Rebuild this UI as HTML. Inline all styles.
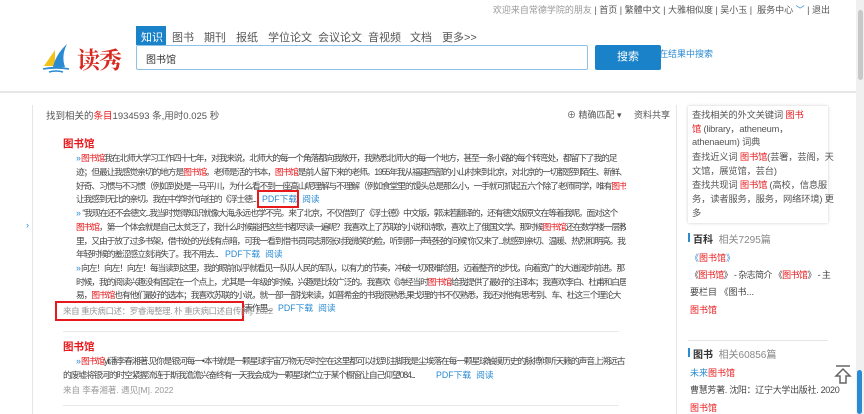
<!DOCTYPE html>
<html><head><meta charset="utf-8"><style>
*{margin:0;padding:0;box-sizing:border-box}
body{width:864px;height:414px;overflow:hidden;background:#fff;font-family:"Liberation Sans","Noto Sans CJK SC",sans-serif;color:#333;position:relative}
.a{position:absolute;white-space:nowrap}
.r{color:#e8191c}
.b{color:#2a8ad2}
.t{font-size:8.8px;color:#444;line-height:13px;overflow:hidden;letter-spacing:-1.15px}
.g{color:#888}
.p{position:absolute;font-size:8.8px;color:#2a8ad2;white-space:nowrap;line-height:13px}
.rp div{height:13.7px}
</style></head><body>
<div class="a" style="right:34px;top:3px;font-size:9px;color:#555"><span style="color:#999">欢迎来自常德学院的朋友</span> | 首页 | 繁體中文 | 大雅相似度 | 吴小玉 | &nbsp;服务中心 <span class="b">﹀</span> | 退出</div>
<div style="position:absolute;right:0;top:0;width:8px;height:414px;background:#f0f0f0"></div>
<div style="position:absolute;right:1px;top:10px;width:5px;height:70px;background:#c8c8c8;border-radius:3px"></div>
<svg class="a" style="left:41px;top:40px" width="30" height="34" viewBox="0 0 30 34">
<path d="M3 26 L14 10 L14 26 Z" fill="#f2c21b"/>
<path d="M12 27 Q15 14 26 4 Q20 16 24 27 Z" fill="#2a8ad2"/>
<path d="M2 29 Q15 26 28 29 Q15 27 2 29Z" fill="#2a8ad2" stroke="#2a8ad2" stroke-width="1.5"/>
<path d="M8 32 Q15 30 22 32" stroke="#2a8ad2" stroke-width="1.5" fill="none"/>
</svg>
<div class="a" style="left:77px;top:42px;font-size:23px;color:#d8281f;font-family:'Noto Serif CJK SC',serif;font-weight:bold;letter-spacing:-1px">读秀</div>
<div class="a" style="left:136px;top:26px;width:30px;height:19px;background:#1a82c8"></div>
<div class="a" style="top:29px;font-size:11px;color:#555;left:141px"><span style="color:#fff">知识</span></div>
<div class="a" style="top:29px;font-size:11px;color:#555;left:172px">图书</div>
<div class="a" style="top:29px;font-size:11px;color:#555;left:204px">期刊</div>
<div class="a" style="top:29px;font-size:11px;color:#555;left:236px">报纸</div>
<div class="a" style="top:29px;font-size:11px;color:#555;left:268px">学位论文</div>
<div class="a" style="top:29px;font-size:11px;color:#555;left:318px">会议论文</div>
<div class="a" style="top:29px;font-size:11px;color:#555;left:368px">音视频</div>
<div class="a" style="top:29px;font-size:11px;color:#555;left:410px">文档</div>
<div class="a" style="top:29px;font-size:11px;color:#555;left:442px">更多&gt;&gt;</div>
<div class="a" style="left:136px;top:45px;width:452px;height:25px;border:1px solid #8cc2e6;border-radius:2px"></div>
<div class="a" style="left:146px;top:51px;font-size:10px;color:#333">图书馆</div>
<div class="a" style="left:595px;top:45px;width:66px;height:25px;background:#1a82c8;border-radius:2px;color:#fff;font-size:11px;text-align:center;line-height:25px">搜索</div>
<div class="a b" style="left:659px;top:47px;font-size:9px">在结果中搜索</div>
<div class="a" style="left:0;top:91px;width:856px;height:2px;background:#e6e6e6"></div>
<div class="a" style="left:32px;top:105px;width:1px;height:309px;background:#e6e6e6"></div>
<div class="a" style="left:676px;top:105px;width:1px;height:309px;background:#e6e6e6"></div>
<div class="a" style="left:26px;top:220px;font-size:9px;color:#2a8ad2">›</div>
<div class="a" style="left:46px;top:108px;font-size:9.5px;color:#555">找到相关的<span class="r">条目</span>1934593 条,用时0.025 秒</div>
<div class="a" style="left:567px;top:108px;font-size:9px;color:#555">⊕ 精确匹配 ▾ &nbsp;&nbsp;&nbsp;&nbsp;资料共享</div>

<div class="a r" style="left:63px;top:136px;font-size:10.5px;font-weight:bold">图书馆</div>
<div class="a t" style="left:76px;top:152px;width:550px"><span class="b">»</span> <span class="r">图书馆</span>我在北师大学习工作四十七年，对我来说，北师大的每一个角落都向我敞开，我熟悉北师大的每一个地方，甚至一条小路的每个转弯处，都留下了我的足</div>
<div class="a t" style="left:76px;top:166px;width:550px">迹；但最让我感觉亲切的地方是<span class="r">图书馆</span>。老师是活的书本，<span class="r">图书馆</span>是前人留下来的老师。1955年我从福建西部的小山村来到北京，对北京的一切都感到陌生、新鲜、</div>
<div class="a t" style="left:76px;top:180px;width:550px">好奇、习惯与不习惯（例如到处是一马平川，为什么看不到一座高山呢理解与不理解（例如食堂里的馒头总是那么小，一手就可抓起五六个除了老师同学，唯有<span class="r">图书馆</span></div>
<div class="a t" style="left:76px;top:193px;width:182px">让我感到无比的亲切。我在中学时代向往的《浮士德...</div>
<div class="p" style="left:262px;top:193px">PDF下载 &nbsp;阅读</div>
<div class="a" style="left:257px;top:190px;width:42px;height:18px;border:2px solid #e8191c"></div>
<div class="a t" style="left:76px;top:207px;width:550px"><span class="b">»</span> &nbsp;"我现在还不会德文...我当时觉得知识就像大海,永远也学不完。来了北京，不仅借到了《浮士德》中文版，郭沫若翻译的，还有德文版原文在等着我呢。面对这个</div>
<div class="a t" style="left:76px;top:221px;width:550px"><span class="r">图书馆</span>，第一个体会就是自己太贫乏了，我什么时候能把这些书都尽读一遍呢？我喜欢上了苏联的小说和诗歌，喜欢上了俄国文学。那时候<span class="r">图书馆</span>还在数学楼一层教室</div>
<div class="a t" style="left:76px;top:235px;width:550px">里，又由于放了过多书架，借书处的光线有点暗，可我一看到借书员同志那张对我微笑的脸，听到那一声轻轻的问候"你又来了...就感到亲切、温暖、热烈和明亮。我</div>
<div class="a t" style="left:76px;top:248px;width:145px">年轻时候的羞涩感立刻消失了。我不用去...</div>
<div class="p" style="left:225px;top:248px">PDF下载 &nbsp;阅读</div>
<div class="a t" style="left:76px;top:262px;width:550px"><span class="b">»</span> 向左！向左！向左！每当读到这里，我的眼前似乎就看见一队队人民的军队，以有力的节奏，冲破一切艰难险阻，迈着整齐的步伐，向着宽广的大道阔步前进。那</div>
<div class="a t" style="left:76px;top:276px;width:550px">时候，我的阅读兴趣没有固定在一个点上，尤其是一年级的时候，兴趣是比较广泛的。我喜欢《诗经当时<span class="r">图书馆</span>给我提供了最好的注译本；我喜欢李白、杜甫和白居</div>
<div class="a t" style="left:76px;top:289px;width:550px">易，<span class="r">图书馆</span>也有他们最好的选本；我喜欢苏联的小说，就一部一部找来读，如普希金的书我很熟悉,果戈理的书不仅熟悉，我还对他有思考别、车、杜这三个理论大</div>
<div class="a t" style="left:76px;top:302px;width:198px">家，当时我还不能完全读懂，但也力图从他们的代表作里...</div>
<div class="p" style="left:278px;top:302px">PDF下载 &nbsp;阅读</div>
<div class="a" style="left:55px;top:301px;width:189px;height:20px;border:2px solid #e8191c;background:#fff"></div>
<div class="a" style="left:63px;top:305px;font-size:8.5px;color:#999;letter-spacing:-0.4px">来自 重庆病口述：罗睿海整理. 朴 重庆病口述自传[M]. 2022</div>
<div class="a" style="left:63px;top:331px;width:556px;height:1px;background:#e8e8e8"></div>

<div class="a r" style="left:63px;top:339px;font-size:10.5px;font-weight:bold">图书馆</div>
<div class="a t" style="left:76px;top:355px;width:550px"><span class="b">»</span> <span class="r">图书馆</span>yil潘李春湘著.见你是银河每一•本书就是一颗星球宇宙万物无尽时空在这里都可以找到注脚我是尘埃落在每一颗星球触摸历史的脉搏倾听天籁的声音上溯远古</div>
<div class="a t" style="left:63px;top:369px;width:370px">的废墟将银河的时空紧握流连于斯我澹澹兴奋终有一天我会成为一颗星球伫立于某个橱窗让自己仰望084...</div>
<div class="p" style="left:436px;top:369px">PDF下载 &nbsp;阅读</div>
<div class="a" style="left:63px;top:384px;font-size:8.5px;color:#999">来自 李春湘著. 遇见[M]. 2022</div>
<div class="a" style="left:63px;top:405px;width:556px;height:1px;background:#e8e8e8"></div>

<div class="a" style="left:688px;top:106px;width:140px;height:117px;box-shadow:0 0 3px #ccc;background:#fff"></div>
<div class="a rp" style="left:692px;top:109px;font-size:9.3px;color:#555;line-height:13.7px;letter-spacing:-0.2px">
<div>查找相关的外文关键词 <span class="r">图书</span></div>
<div><span class="r">馆</span> (library，atheneum，</div>
<div>athenaeum) 词典</div>
<div style="margin-top:1px">查找近义词 <span class="r">图书馆</span>(芸署，芸阁，天</div>
<div>文馆，展览馆，芸台)</div>
<div style="margin-top:1px">查找共现词 <span class="r">图书馆</span> (高校，信息服</div>
<div>务，读者服务，服务，网络环境) 更</div>
<div>多</div>
</div>
<div class="a" style="left:688px;top:233px;width:2px;height:9px;background:#2a8ad2"></div>
<div class="a" style="left:693px;top:231px;font-size:10px"><b>百科</b> &nbsp;<span class="g">相关7295篇</span></div>
<div class="a" style="left:690px;top:251px;font-size:9px"><span class="b">《</span><span class="r">图书馆</span><span class="b">》</span></div>
<div class="a" style="left:690px;top:268px;font-size:9px;color:#444;letter-spacing:-0.6px">《<span class="r">图书馆</span>》 - 杂志简介 《<span class="r">图书馆</span>》 - 主</div>
<div class="a" style="left:690px;top:285px;font-size:9px;color:#444">要栏目 《图书...</div>
<div class="a r" style="left:690px;top:303px;font-size:9px">图书馆</div>
<div class="a" style="left:688px;top:340px;width:140px;height:1px;background:#e6e6e6"></div>
<div class="a" style="left:688px;top:348px;width:2px;height:9px;background:#2a8ad2"></div>
<div class="a" style="left:693px;top:346px;font-size:10px"><b>图书</b> &nbsp;<span class="g">相关60856篇</span></div>
<div class="a" style="left:690px;top:366px;font-size:9px"><span class="b">未来</span><span class="r">图书馆</span></div>
<div class="a" style="left:690px;top:383px;font-size:9px;color:#444;letter-spacing:-0.3px">曹慧芳著. 沈阳：辽宁大学出版社. 2020</div>
<div class="a r" style="left:690px;top:401px;font-size:9px">图书馆</div>
<svg class="a" style="left:834px;top:364px" width="18" height="22" viewBox="0 0 18 22"><path d="M2 2H16" stroke="#666" stroke-width="1.5"/><path d="M9 5 L2 12 H6 V19 H12 V12 H16 Z" fill="none" stroke="#666" stroke-width="1.5"/></svg>
<div class="a" style="left:857px;top:370px;width:5px;height:44px;background:#2a8ad2;border-radius:3px"></div>
</body></html>
